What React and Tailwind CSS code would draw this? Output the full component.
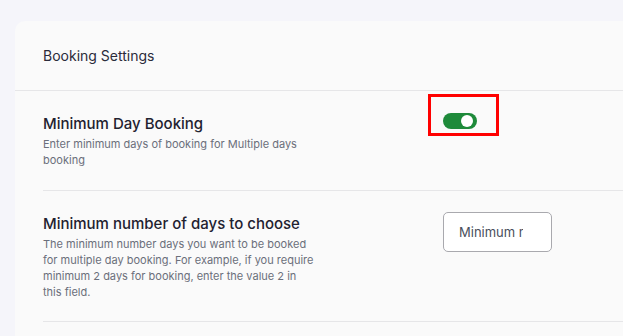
export default function App() {
  return (
    <div className="min-h-screen bg-[#f5f5fa] pl-[15px] pt-[21px] overflow-hidden" style={{ fontFamily: 'Inter, "Noto Sans", sans-serif' }}>
      <div className="w-[640px] bg-[#fafafa] rounded-tl-[10px] min-h-[320px]">
        {/* Header */}
        <div className="h-[70px] flex items-center px-[28px] border-b border-[#e6e6e8]">
          <h1 className="text-[14px] text-[#2b2b3a]">Booking Settings</h1>
        </div>

        {/* Rows */}
        <div className="pl-[28px]">
          <div className="grid grid-cols-[400px_1fr] pt-[21px] pb-[22px] border-b border-[#e6e6e8]">
            <div>
              <h2 className="text-[15px] leading-[24px] font-medium text-[#1f2230]">Minimum Day Booking</h2>
              <p className="w-[274px] text-[11px] leading-[16px] text-[#6b6f7b]">
                Enter minimum days of booking for Multiple days booking
              </p>
            </div>
            <div className="relative pt-[1px]">
              {/* highlight annotation */}
              <div className="absolute left-[-15px] top-[-18px] w-[71px] h-[42px] border-[3px] border-[#ff0000]" />
              <button className="w-[34px] h-[16px] rounded-full bg-[#1e8a3a] flex items-center justify-end pr-[4px]">
                <span className="w-[12px] h-[12px] rounded-full bg-white" />
              </button>
            </div>
          </div>

          <div className="grid grid-cols-[400px_1fr] pt-[21px] pb-[21px] border-b border-[#e6e6e8]">
            <div>
              <h2 className="text-[15px] leading-[24px] font-medium text-[#1f2230]">Minimum number of days to choose</h2>
              <p className="w-[274px] text-[11px] leading-[16px] text-[#6b6f7b]">
                The minimum number days you want to be booked for multiple day booking. For example, if you require minimum 2 days for booking, enter the value 2 in this field.
              </p>
            </div>
            <div>
              <input
                type="text"
                placeholder="Minimum number of days"
                className="w-[109px] h-[40px] bg-white border border-[#a9a9ae] rounded-[5px] pl-[15px] pr-[28px] text-[13px] text-[#4a4f5c] placeholder:text-[#4a4f5c] outline-none"
              />
            </div>
          </div>
        </div>
      </div>
    </div>
  );
}
